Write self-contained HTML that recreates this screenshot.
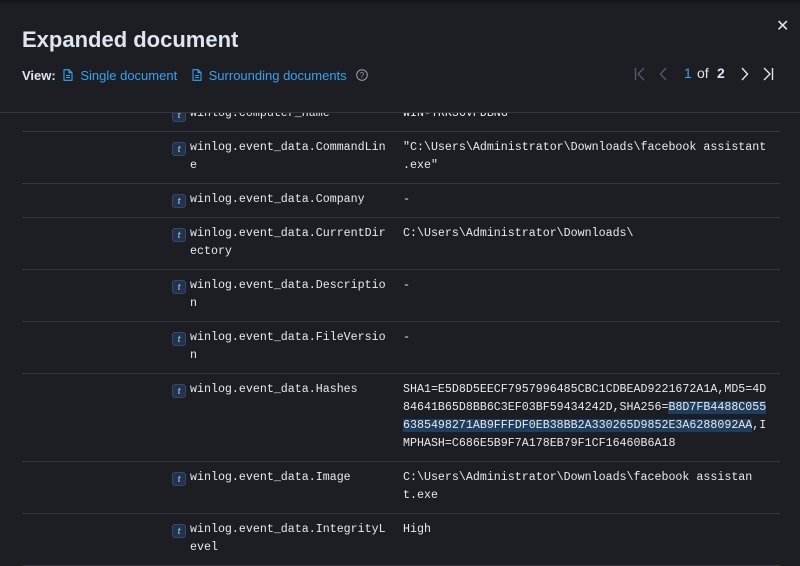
<!DOCTYPE html>
<html><head><style>
*{margin:0;padding:0;box-sizing:border-box}
body{width:800px;height:563px;background:#1d1e24;overflow:hidden;position:relative;font-family:"Liberation Sans",sans-serif;color:#dfe5ef}
.top{position:absolute;left:0;top:0;width:800px;height:3px;background:#16171c}
.hdr{position:absolute;left:0;top:3px;width:800px;height:110px;background:#1d1e24;z-index:2;border-bottom:1px solid #343741}
h1{position:absolute;left:22px;top:24px;font-size:22px;font-weight:bold;color:#dfe5ef}
.view{position:absolute;left:22px;top:65px;font-size:13px;color:#dfe5ef;white-space:nowrap}
.view b{margin-right:4px}
.lnk{color:#36a2ef;margin-left:7px}
.ic{vertical-align:-1px}
.pg{position:absolute;top:0;left:0;width:800px;height:110px;font-size:14px}
.pg span{position:absolute;top:62px}
.pg svg{position:absolute;top:64px}
.x{position:absolute;left:776px;top:13px;font-size:16px;color:#dfe5ef}
.rows{position:absolute;left:22px;top:98px;width:758px;font-family:"Liberation Mono",monospace;font-size:11.65px;line-height:18px;color:#e6eaf0}
.r{display:flex;border-bottom:1px solid #343741;padding:7px 0 8px}
.b{width:150px;flex:none}
.k{width:231px;flex:none;position:relative;word-break:break-all}
.k span{display:block;width:199px;margin-left:18px}
.k:before{content:"t";position:absolute;left:0;top:3px;width:14px;height:14px;background:#25334a;border:1px solid #2f4a6e;border-radius:3px;color:#79aad9;font-size:9px;font-style:italic;font-weight:bold;line-height:12px;text-align:center;font-family:"Liberation Sans",sans-serif;box-sizing:border-box}
.v{width:368px;word-break:break-all}
.hl{background:#1f3d5c}
</style></head><body>
<div class="top"></div>
<div class="hdr">
<h1>Expanded document</h1>
<div class="view"><b>View:</b> <svg class="ic" width="10" height="12" viewBox="0 0 10 12"><path d="M1 .7h5l3 3v7.6H1z M6 .7v3h3 M3 6.5h4 M3 8.5h4" fill="none" stroke="#36a2ef" stroke-width="1.1"/></svg><span class="lnk">Single document</span> &nbsp;&nbsp;&nbsp;<svg class="ic" width="10" height="12" viewBox="0 0 10 12"><path d="M1 .7h5l3 3v7.6H1z M6 .7v3h3 M3 6.5h4 M3 8.5h4" fill="none" stroke="#36a2ef" stroke-width="1.1"/></svg><span class="lnk">Surrounding documents</span> <svg class="ic" style="margin-left:6px" width="12" height="12" viewBox="0 0 12 12"><circle cx="6" cy="6" r="5.3" fill="none" stroke="#98a2b3"/><text x="6" y="9" font-size="8" text-anchor="middle" fill="#98a2b3" font-family="Liberation Sans">?</text></svg></div>
<div class="pg">
<svg style="left:634px" width="11" height="14" viewBox="0 0 11 14"><path d="M1.5 1v12 M10 1L4 7l6 6" fill="none" stroke="#535966" stroke-width="1.4"/></svg>
<svg style="left:659px" width="8" height="14" viewBox="0 0 8 14"><path d="M7 1L1.5 7 7 13" fill="none" stroke="#535966" stroke-width="1.4"/></svg>
<span style="left:684px;color:#36a2ef">1</span>
<span style="left:697px">of</span>
<span style="left:717px;font-weight:bold">2</span>
<svg style="left:741px" width="8" height="14" viewBox="0 0 8 14"><path d="M1 1l5.5 6L1 13" fill="none" stroke="#dfe5ef" stroke-width="1.4"/></svg>
<svg style="left:763px" width="11" height="14" viewBox="0 0 11 14"><path d="M1 1l6 6-6 6 M9.5 1v12" fill="none" stroke="#dfe5ef" stroke-width="1.4"/></svg>
</div>
<div class="x">✕</div>
</div>
<div class="rows">
<div class="r"><div class="b"></div><div class="k"><span>winlog.computer_name</span></div><div class="v">WIN-TRK36VPDBNG</div></div>
<div class="r"><div class="b"></div><div class="k"><span>winlog.event_data.CommandLine</span></div><div class="v">"C:\Users\Administrator\Downloads\facebook assistant<br>.exe"</div></div>
<div class="r"><div class="b"></div><div class="k"><span>winlog.event_data.Company</span></div><div class="v">-</div></div>
<div class="r"><div class="b"></div><div class="k"><span>winlog.event_data.CurrentDirectory</span></div><div class="v">C:\Users\Administrator\Downloads\</div></div>
<div class="r"><div class="b"></div><div class="k"><span>winlog.event_data.Description</span></div><div class="v">-</div></div>
<div class="r"><div class="b"></div><div class="k"><span>winlog.event_data.FileVersion</span></div><div class="v">-</div></div>
<div class="r"><div class="b"></div><div class="k"><span>winlog.event_data.Hashes</span></div><div class="v">SHA1=E5D8D5EECF7957996485CBC1CDBEAD9221672A1A,MD5=4D<br>84641B65D8BB6C3EF03BF59434242D,SHA256=<span class="hl">B8D7FB4488C055<br>6385498271AB9FFFDF0EB38BB2A330265D9852E3A6288092AA</span>,I<br>MPHASH=C686E5B9F7A178EB79F1CF16460B6A18</div></div>
<div class="r"><div class="b"></div><div class="k"><span>winlog.event_data.Image</span></div><div class="v">C:\Users\Administrator\Downloads\facebook assistan<br>t.exe</div></div>
<div class="r"><div class="b"></div><div class="k"><span>winlog.event_data.IntegrityLevel</span></div><div class="v">High</div></div>
</div>
</body></html>
